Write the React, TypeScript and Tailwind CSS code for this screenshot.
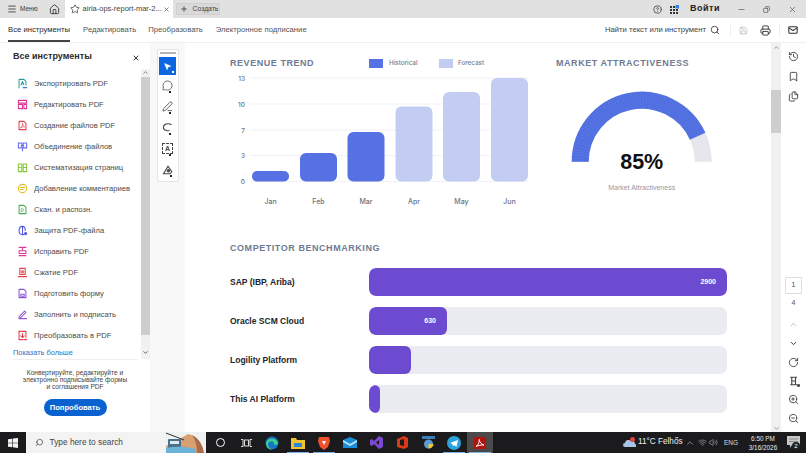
import React from "react";
import {
  Menu, Home, Star, X, Plus, CircleHelp, Search, Save, Printer, Mail, Minus, Copy,
  ChevronUp, ChevronDown, RotateCw, ZoomIn, ZoomOut, MousePointer2, PenLine, MessageCircle,
  Bookmark, Files, History, Volume2, Wifi,
} from "lucide-react";

const S = ({ c, children, w = 13 }: { c: string; children: React.ReactNode; w?: number }) => (
  <svg width={w} height={w} viewBox="0 0 16 16" fill="none" stroke={c} strokeWidth="1.5" strokeLinejoin="round" strokeLinecap="round" className="shrink-0">
    {children}
  </svg>
);

const tools: [string, string, React.ReactNode][] = [
  ["Экспортировать PDF", "#2f9c9c", <><path d="M3 14V2h7l3 3v5" /><path d="M6 10l2-5 2 5M6.7 8.5h2.6" /><path d="M9 14h5" stroke="#2b7fd8" /></>],
  ["Редактировать PDF", "#d9338f", <><path d="M2 2h12v4H2zM2 8h6v6H2zM10 8h4v6h-4z" /></>],
  ["Создание файлов PDF", "#e3404e", <><path d="M3 2h7l3 3v9H3z" /><path d="M5.5 11c2-1 3-4 2.500-6 .5 3 1.500 4 3 5-2-.2-4 .2-5.500 1z" strokeWidth="1" /></>],
  ["Объединение файлов", "#6468e8", <><path d="M2 3h5v7H2zM9 3h5v7H9z" /><path d="M6 6.500h4M8 11v3" /></>],
  ["Систематизация страниц", "#86c440", <><path d="M2 3h5v11H2zM9 3h5v11H9z" /><path d="M9 8h5M2 8h3" /></>],
  ["Добавление комментариев", "#e2bd1c", <><circle cx="8" cy="8" r="6" /><path d="M5 6.500h6M5 9.500h4" /></>],
  ["Скан. и распозн.", "#48ad55", <><path d="M3 2h7l3 3v9H3z" /><path d="M6 11V7l2-1 2 3-3 2z" strokeWidth="1" /></>],
  ["Защита PDF-файла", "#5558e0", <><path d="M8 2C5 2 3 4 3 8s2 6 5 6c1 0 2-.3 2.500-1" /><path d="M8 2v12M8 2c2 0 4 2 4 6" /><circle cx="12.500" cy="12.500" r="1.500" fill="#5558e0" /></>],
  ["Исправить PDF", "#e0399b", <><path d="M3 2h10M8 2v5M3 7h10v4H3zM3 14h10" /></>],
  ["Сжатие PDF", "#e3404e", <><path d="M4 2h8v9H4zM2 14h12" /><path d="M6 6h4M6 8.500h4" /></>],
  ["Подготовить форму", "#8a55d8", <><path d="M3 2h7l3 3v9H3z" /><path d="M5.500 9h5v3h-5z" /></>],
  ["Заполнить и подписать", "#9a58d6", <><path d="M3 11L11 3l2 2-8 8H3z" /><path d="M3 14h11" /></>],
  ["Преобразовать в PDF", "#e3404e", <><path d="M3 2h10v9" /><path d="M3 2v12h5" /><path d="M8 5v6M5.500 8.500L8 11l2.500-2.500M10 14h4" /></>],
];

const Sidebar = () => (
  <aside className="flex h-full w-[150px] shrink-0 flex-col bg-white">
    <div className="flex h-[26px] items-center justify-between pl-[13px] pr-[10px] pt-[1px]">
      <span className="text-[9px] font-bold text-[#2c2c2c]">Все инструменты</span>
      <X size={8} strokeWidth={3} className="mt-[2px] text-[#333]" />
    </div>
    <div className="flex h-[290px]">
      <div className="flex-1 pl-[17px]">
        <ul className="pt-[4px]">
          {tools.map(([t, c, d]) => (
            <li key={t} className="flex h-[21px] items-center gap-[10px] text-[7.6px] text-[#4b4b4b]">
              <S c={c} w={11}>{d}</S>
              <span className="whitespace-nowrap -ml-[4px]">{t}</span>
            </li>
          ))}
        </ul>
        <div className="-ml-[4px] mt-[1px] text-[7.4px] text-[#2f6fc4]">Показать больше</div>
      </div>
      <div className="flex h-full w-[9px] flex-col items-center bg-[#f1f1f1]">
        <ChevronUp size={7} strokeWidth={3} className="mt-[0px] text-[#777]" />
        <div className="mt-[1px] h-[258px] w-full bg-[#cdcdcd]" />
        <ChevronDown size={7} strokeWidth={3} className="mt-[14px] text-[#555]" />
      </div>
    </div>
    <div className="mx-[13px] flex flex-1 flex-col items-center border-t border-[#eeeeee] pt-[9px] text-center text-[6.6px] leading-[7.2px] text-[#444]">
      <p className="w-[108px]">Конвертируйте, редактируйте и электронно подписывайте формы и соглашения PDF</p>
      <button className="mt-[8px] h-[17px] w-[63px] rounded-full bg-[#0a62d0] text-[7.6px] font-bold text-white">Попробовать</button>
    </div>
  </aside>
);

const Palette = () => {
  const cls = "flex h-[21px] items-center justify-center relative text-[#444]";
  const dot = <span className="absolute bottom-[3px] right-[2px] h-[2px] w-[2px] bg-[#222]" />;
  return (
    <div className="flex h-[133px] w-[22px] flex-col items-center rounded-[2px] border border-[#e4e4e4] bg-white">
      <div className="mb-[3px] mt-[2px] h-[2px] w-[16px] bg-[#b5b5b5]" />
      <div className="relative flex h-[18px] w-[17px] items-center justify-center bg-[#0d66e0] text-white">
        <MousePointer2 size={9} fill="white" strokeWidth={1} />
        <span className="absolute bottom-[2px] right-[2px] h-[2px] w-[2px] bg-white" />
      </div>
      <div className={cls}><MessageCircle size={11} strokeWidth={1.6} />{dot}</div>
      <div className={cls}><PenLine size={11} strokeWidth={1.8} />{dot}</div>
      <div className={cls}>
        <svg width="11" height="11" viewBox="0 0 16 16" fill="none" stroke="#444" strokeWidth="1.500"><path d="M14 4C9 1 2 3 2 8s8 5 9 4" /></svg>{dot}
      </div>
      <div className={cls}>
        <span className="flex h-[11px] w-[11px] items-center justify-center border border-dashed border-[#444] text-[7px] font-bold leading-none">A</span>{dot}
      </div>
      <div className={cls}>
        <svg width="12" height="12" viewBox="0 0 16 16" fill="none" stroke="#444" strokeWidth="1.500"><path d="M2 13L8 3l5 7-2 3z" /><circle cx="8.500" cy="9" r="1.500" fill="#444" /></svg>{dot}
      </div>
    </div>
  );
};

const Heading = ({ children, className = "" }: { children: React.ReactNode; className?: string }) => (
  <h2 className={`text-[9px] font-bold uppercase leading-[10px] tracking-[0.55px] text-[#6f7b93] ${className}`}>{children}</h2>
);

const bars = [
  ["Jan", 252, 171, "#5671e3"], ["Feb", 300, 153, "#5671e3"], ["Mar", 347.5, 132, "#5671e3"],
  ["Apr", 395.5, 106.5, "#c3cdf4"], ["May", 443, 92, "#c3cdf4"], ["Jun", 491, 78, "#c3cdf4"],
] as const;

const RevenueChart = () => (
  <svg width="310" height="140" viewBox="225 70 310 140" className="block">
    {[[78, "13"], [104, "10"], [130, "7"], [155.500, "3"], [181.500, "0"]].map(([y, l]) => (
      <g key={l as string}>
        <line x1="250" x2="528" y1={y as number} y2={y as number} stroke="#f0f1f4" strokeWidth="1" />
        <text x="245" y={(y as number) + 2.500} textAnchor="end" fontSize="6.500" fontFamily="Inter, sans-serif" fill="#6b7280" fontWeight="500">{l}</text>
      </g>
    ))}
    {bars.map(([m, x, y, c]) => (
      <g key={m}>
        <rect x={x} y={y} width="37" height={181.500 - y} rx={m === "Jan" ? 5 : 6} fill={c} />
        <text x={x + 18.500} y="203.500" textAnchor="middle" fontSize="7" fontFamily="Inter, sans-serif" fill="#6b7280" fontWeight="500">{m}</text>
      </g>
    ))}
  </svg>
);

const Gauge = () => {
  const cx = 641.7, cy = 161.7, r = 61.5;
  const a = Math.PI * (1 - 0.864);
  const ex = cx + r * Math.cos(a), ey = cy - r * Math.sin(a);
  const fg = `M${cx - r} ${cy}A${r} ${r} 0 0 1 ${ex} ${ey}`;
  const bg = `M${ex} ${ey}A${r} ${r} 0 0 1 ${cx + r} ${cy}`;
  return (
    <svg width="170" height="130" viewBox="556 70 170 130" className="block">
      <path d={bg} fill="none" stroke="#e5e7ec" strokeWidth="17" />
      <path d={fg} fill="none" stroke="#4f6ee0" strokeWidth="17" />
      <path d={fg} fill="none" stroke="#6a84e8" strokeWidth="17" strokeDasharray="0.8 2" opacity="0.5" />
      <text x={cx} y="168.500" textAnchor="middle" fontSize="21.500" fontWeight="700" fill="#111" fontFamily="'Liberation Sans', sans-serif">85%</text>
      <text x={cx} y="189.500" textAnchor="middle" fontSize="7" fill="#9499a8" fontFamily="'Liberation Sans', sans-serif">Market Attractiveness</text>
    </svg>
  );
};

const rows = [
  { n: "SAP (IBP, Ariba)", w: "w-full", v: "2900" },
  { n: "Oracle SCM Cloud", w: "w-[78px]", v: "630" },
  { n: "Logility Platform", w: "w-[42px]", v: "" },
  { n: "This AI Platform", w: "w-[2px]", v: "" },
];

const Doc = () => (
  <main className="h-full flex-1 overflow-hidden bg-white pl-[45px] pt-[13px]">
    <div className="flex">
      <section className="w-[326px]">
        <div className="flex h-[14px] items-center">
          <Heading className="w-[139px]">Revenue Trend</Heading>
          <span className="h-[9px] w-[14px] bg-[#5671e3]" />
          <span className="ml-[6px] w-[50px] pt-[2px] font-['Inter',sans-serif] text-[6.300px] font-medium text-[#737b8c]">Historical</span>
          <span className="h-[9px] w-[14px] bg-[#c3cdf4]" />
          <span className="ml-[5px] pt-[2px] font-['Inter',sans-serif] text-[6.300px] font-medium text-[#737b8c]">Forecast</span>
        </div>
      </section>
      <section>
        <div className="flex h-[14px] items-center"><Heading>Market Attractiveness</Heading></div>
      </section>
    </div>
    <div className="-ml-[5px] flex">
      <div className="w-[331px]"><RevenueChart /></div>
      <Gauge />
    </div>
    <Heading className="mt-[33px]">Competitor Benchmarking</Heading>
    <div className="mt-[15px] flex flex-col gap-[11px]">
      {rows.map((r) => (
        <div key={r.n} className="flex items-center">
          <span className="w-[139px] text-[8.500px] font-bold text-[#22252d]">{r.n}</span>
          <div className="h-[28px] w-[358px] overflow-hidden rounded-[7px] bg-[#ebebf2]">
            <div className={`flex h-full items-center justify-end rounded-[6px] bg-[#6d4bd1] pr-[11px] text-[7px] font-bold text-white ${r.w}`}>{r.v}</div>
          </div>
        </div>
      ))}
    </div>
  </main>
);

const Rail = () => (
  <div className="flex h-full w-[25px] shrink-0 flex-col items-center bg-white text-[#444]">
    <div className="mt-[8px] flex flex-col items-center gap-[9px]">
      <History size={11} strokeWidth={2} />
      <Bookmark size={11} strokeWidth={2} />
      <Files size={11} strokeWidth={2} />
    </div>
    <div className="mt-[175px] flex h-[17px] w-[17px] items-center justify-center rounded-[1px] border border-[#dedede] text-[7px]">1</div>
    <div className="mt-[3px] text-[7px] leading-[12px] text-[#555]">4</div>
    <ChevronUp size={9} strokeWidth={2} className="mt-[11px] text-[#aaa]" />
    <ChevronDown size={9} strokeWidth={2.500} className="mt-[10px] text-[#333]" />
    <RotateCw size={11} strokeWidth={2} className="mt-[9px]" />
    <svg width="12" height="12" viewBox="0 0 16 16" fill="none" stroke="#444" strokeWidth="1.500" className="mt-[7px]">
      <path d="M3 3h9M3 13h9M5 3v10M10 3v10M5 8h5" /><rect x="13" y="13" width="2" height="2" fill="#222" />
    </svg>
    <ZoomIn size={11} strokeWidth={2} className="mt-[7px]" />
    <ZoomOut size={11} strokeWidth={2} className="mt-[8px]" />
  </div>
);

const Tb = ({ x, children, active = false, under = false }: { x: string; children: React.ReactNode; active?: boolean; under?: boolean }) => (
  <div className={`relative flex h-full w-[26px] items-center justify-center ${x} ${active ? "bg-[#4a4a4a]" : ""}`}>
    {children}
    {under && <span className="absolute inset-x-[2px] bottom-0 h-[1px] bg-[#7fb2e0]" />}
  </div>
);

const Taskbar = () => (
  <footer className="flex h-[21px] shrink-0 items-center bg-[#1b1b1d] text-white">
    <div className="flex w-[26px] items-center justify-center">
      <svg width="10" height="10" viewBox="0 0 10 10" fill="#f2f2f2"><path d="M0 1.300L4.300.700v4H0zM4.900.600L10 0v4.700H4.900zM0 5.300h4.300v4L0 8.700zM4.900 5.300H10V10l-5.100-.7z" /></svg>
    </div>
    <div className="flex h-full w-[180px] items-center overflow-hidden bg-[#f3f3f3] pl-[9px]">
      <Search size={9} strokeWidth={1.800} className="text-[#333] -scale-x-100" />
      <span className="ml-[6px] w-[122px] text-[8.300px] text-[#444]">Type here to search</span>
      <svg width="40" height="21" viewBox="0 0 40 21" className="shrink-0">
        <rect width="40" height="21" fill="#eef1f2" />
        <path d="M0 21V14Q12 8 22 2Q34 4 38 21z" fill="#d9a074" />
        <path d="M26 3Q36 8 38 21H31Q31 10 26 3z" fill="#a86c46" />
        <rect x="2" y="7" width="13" height="9" rx="1" fill="#49708a" />
        <rect x="4" y="9" width="9" height="3" fill="#dfe9ee" />
        <path d="M0 16Q14 13 30 17V21H0z" fill="#6db2d8" />
        <path d="M0 1L18 8" stroke="#333" strokeWidth="1" />
      </svg>
    </div>
    <div className="ml-[1px] flex h-full items-center">
      <Tb x="">
        <span className="h-[9px] w-[9px] rounded-full border-[1.500px] border-white" />
      </Tb>
      <Tb x="">
        <svg width="11" height="10" viewBox="0 0 11 10" fill="none" stroke="#ddd"><rect x="3.500" y="2" width="4" height="6" /><path d="M0 1.500h2v7H0M11 1.500H9v7h2" /></svg>
      </Tb>
      <Tb x="">
        <svg width="14" height="14" viewBox="0 0 14 14"><circle cx="7" cy="7" r="6.500" fill="#1677c8" /><path d="M1 7C2 2 11 1 13 7c0 2-3 2.500-4 1.500C10 6 7 4 4 6c-2 1.500-1 6 3 7.500C3.500 14 1 11 1 7z" fill="#3fd08a" /></svg>
      </Tb>
      <Tb x="" under>
        <svg width="14" height="12" viewBox="0 0 14 12"><path d="M0 1h5l1 2h8v9H0z" fill="#f2c230" /><rect x="3" y="6" width="8" height="4" fill="#2a8ad8" /></svg>
      </Tb>
      <Tb x="" under>
        <svg width="12" height="14" viewBox="0 0 12 14"><path d="M1 1h10l1 4-2 6-4 3-4-3-2-6z" fill="#f0512a" /><path d="M4 5h4L6 9z" fill="#fff" /></svg>
      </Tb>
      <Tb x="">
        <svg width="14" height="12" viewBox="0 0 14 12"><path d="M0 3l7-3 7 3v8H0z" fill="#1a8fd8" /><path d="M0 3l7 4 7-4v2L7 9 0 5z" fill="#bfe4f8" /></svg>
      </Tb>
      <Tb x="">
        <svg width="13" height="13" viewBox="0 0 13 13"><path d="M9 0l4 2v9l-4 2-5-5-2 2-2-1V4l2-1 2 2z" fill="#7b4ad0" /><path d="M9 4L6 6.500 9 9z" fill="#1b1b1d" /></svg>
      </Tb>
      <Tb x="">
        <svg width="13" height="13" viewBox="0 0 13 13"><path d="M1 3l7-3 4 2v9l-4 2-7-2z" fill="#d83b1a" /><path d="M4 4l4-1v7l-4-1z" fill="#1b1b1d" /></svg>
      </Tb>
      <Tb x="">
        <svg width="13" height="14" viewBox="0 0 13 14"><rect x="0" y="0" width="13" height="3" fill="#3a7fb8" /><circle cx="6.500" cy="8" r="4.500" fill="#5d9ad0" /><path d="M6.500 8h5a4.500 4.500 0 0 1-5 4.500z" fill="#f0c830" /></svg>
      </Tb>
      <Tb x="" under>
        <svg width="14" height="14" viewBox="0 0 14 14"><circle cx="7" cy="7" r="7" fill="#2aa3dc" /><path d="M3 7l8-3-1.500 7-2.500-2-1 1.500L5.500 8z" fill="#fff" /></svg>
      </Tb>
      <Tb x="" active under>
        <svg width="12" height="12" viewBox="0 0 12 12"><rect width="12" height="12" rx="1" fill="#b3120e" /><path d="M2 9.500C4 8.500 5.500 5 5.300 2.500c.3 3 2 4.800 4.700 5.500-2.800-.2-5.500.4-8 1.500z" fill="none" stroke="#fff" strokeWidth="1" /></svg>
      </Tb>
    </div>
    <div className="flex-1" />
    <div className="flex h-full items-center text-[#eeeeee]">
      <svg width="13" height="11" viewBox="0 0 13 11" className="mr-[2px]"><path d="M2 10a2 2 0 0 1 0-4 3.500 3.500 0 0 1 6-2 3 3 0 0 1 4 3 1.500 1.500 0 0 1 0 3z" fill="#a9c4ea" /><circle cx="9.500" cy="2.500" r="2.500" fill="#e0443a" /></svg>
      <span className="w-[52px] whitespace-nowrap text-[8.200px]">11°C Felhős</span>
      <ChevronUp size={10} strokeWidth={1.500} className="ml-[-5px] mr-[3px] text-[#ccc]" />
      <Wifi size={9} strokeWidth={2} className="text-[#999]" />
      <Volume2 size={9} strokeWidth={2} className="ml-[2px] text-[#999]" />
      <span className="ml-[6px] w-[21px] text-[6.500px] text-[#ddd]">ENG</span>
      <div className="flex w-[36px] flex-col items-center text-[6.400px] leading-[9px] text-[#e8e8e8]">
        <span>6:50 PM</span>
        <span>3/16/2026</span>
      </div>
      <div className="relative ml-[6px] mr-[6px] h-[13px] w-[13px]">
        <svg width="13" height="12" viewBox="0 0 13 12"><path d="M0 0h13v9H5l-2 3V9H0z" fill="#c8c8c8" /><path d="M2 3h9M2 5.500h9" stroke="#888" /></svg>
        <span className="absolute -bottom-[1px] right-[0px] flex h-[8px] w-[8px] items-center justify-center rounded-full bg-[#222] text-[6px] text-white">2</span>
      </div>
    </div>
  </footer>
);

export default function App() {
  return (
    <div className="flex h-[453px] w-[806px] flex-col overflow-hidden bg-white font-['Liberation_Sans',sans-serif] text-[#333]">
      <header className="flex h-[18px] shrink-0 items-center bg-[#e1e1e1] text-[#3a3a3a]">
        <Menu size={10} strokeWidth={2} className="ml-[7px]" />
        <span className="ml-[3px] text-[6.500px]">Меню</span>
        <Home size={11} strokeWidth={2} className="ml-[11px]" />
        <div className="ml-[5px] flex h-full w-[108px] items-center bg-white pl-[5px]">
          <Star size={10} strokeWidth={1.800} />
          <span className="ml-[3px] w-[78px] whitespace-nowrap text-[7.500px] text-[#444]">airia-ops-report-mar-2...</span>
          <X size={7} strokeWidth={2} className="ml-[2px]" />
        </div>
        <div className="ml-[3px] flex h-[12px] w-[44px] items-center rounded-[1px] border border-[#d0d0d0] bg-[#d9d9d9] pl-[3px]">
          <Plus size={8} strokeWidth={2.500} />
          <span className="ml-[5px] text-[6.800px] text-[#444]">Создать</span>
        </div>
        <div className="flex-1" />
        <CircleHelp size={9} strokeWidth={2} />
        <svg width="9" height="9" viewBox="0 0 9 9" className="ml-[8px]" fill="#333">
          <path d="M0 1h2v2H0zM3 1h2v2H3zM0 4h2v2H0zM3 4h2v2H3zM6 4h2v2H6zM0 7h2v2H0zM3 7h2v2H3zM6 7h2v2H6z" />
          <rect x="5.500" y="0" width="3.500" height="3.500" fill="#2a82e8" />
        </svg>
        <span className="ml-[11px] w-[26px] text-[9px] font-bold tracking-[0.5px] text-[#222]">Войти</span>
        <Minus size={9} strokeWidth={1.500} className="ml-[21px]" />
        <Copy size={7} strokeWidth={2} className="ml-[17px] -scale-x-100" />
        <X size={9} strokeWidth={1.500} className="ml-[18px] mr-[9px]" />
      </header>
      <nav className="flex h-[25px] shrink-0 items-stretch border-b border-[#f0f0f0] bg-white pl-[8px] text-[7.700px] text-[#555]">
        <div className="flex items-center border-b-2 border-[#444] pt-[2px] text-[#2b2b2b]">Все инструменты</div>
        <div className="ml-[13px] flex items-center">Редактировать</div>
        <div className="ml-[12px] flex items-center">Преобразовать</div>
        <div className="ml-[13px] flex items-center">Электронное подписание</div>
        <div className="flex-1" />
        <div className="flex items-center">
          <span className="text-[#444]">Найти текст или инструмент</span>
          <Search size={10} strokeWidth={2} className="ml-[4px] text-[#333]" />
          <span className="ml-[10px] h-[12px] w-px bg-[#eeeeee]" />
          <Save size={9} strokeWidth={1.500} className="ml-[8px] text-[#aaa]" />
          <Printer size={11} strokeWidth={2} className="ml-[12px] text-[#333]" />
          <span className="ml-[8px] h-[12px] w-px bg-[#eeeeee]" />
          <Mail size={10} strokeWidth={2.500} className="ml-[8px] mr-[8px] text-[#333]" />
        </div>
      </nav>
      <div className="flex min-h-0 flex-1">
        <Sidebar />
        <div className="flex w-[35px] shrink-0 justify-center bg-[#f8f8f8] pt-[6px]"><Palette /></div>
        <Doc />
        <div className="flex h-full w-[10px] shrink-0 flex-col items-center bg-[#f1f1f1]">
          <ChevronUp size={7} strokeWidth={2.500} className="mt-[1px] text-[#777]" />
          <div className="mt-[39px] h-[43px] w-full bg-[#cdcdcd]" />
          <div className="flex-1" />
          <ChevronDown size={7} strokeWidth={2.500} className="text-[#777]" />
        </div>
        <Rail />
      </div>
      <Taskbar />
    </div>
  );
}
